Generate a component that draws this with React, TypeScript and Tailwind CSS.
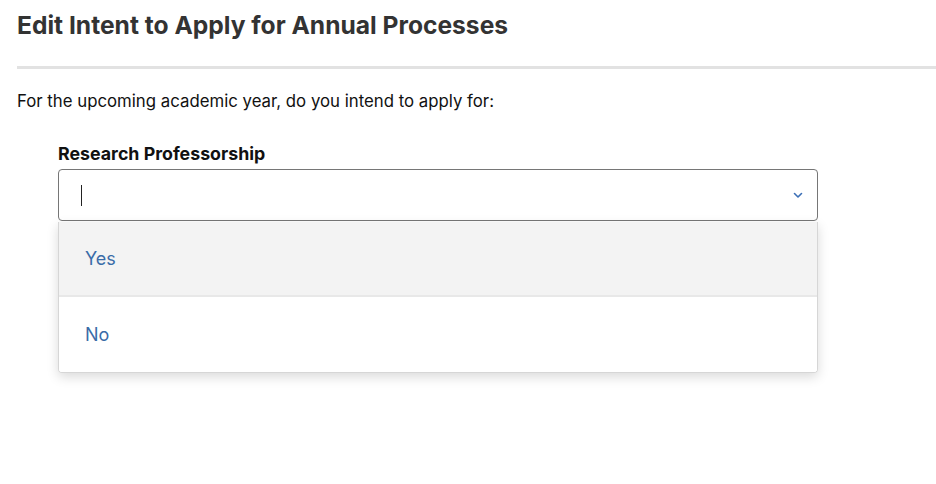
import React from "react";

const Chevron = () => (
  <svg width="10" height="7" viewBox="0 0 10 7" fill="none">
    <path d="M1.5 1.5L5 5L8.5 1.5" stroke="#3b6fb6" strokeWidth="1.6" strokeLinecap="round" strokeLinejoin="round" />
  </svg>
);

const App = () => {
  const options = ["Yes", "No"];

  return (
    <div className="h-[484px] w-[936px] bg-white font-['Inter',sans-serif] text-[#111]">
      <div className="pl-[17px] pt-[9px]">
        <h1 className="text-[24.6px] font-bold leading-[32px] text-[#333]">
          Edit Intent to Apply for Annual Processes
        </h1>
        <div className="mt-[25px] h-[3px] bg-[#e2e2e2]" />
        <p className="mt-[20px] text-[16.8px] leading-[24px]">
          For the upcoming academic year, do you intend to apply for:
        </p>

        <div className="mt-[28px] ml-[41px] w-[760px]">
          <label className="block text-[17.8px] font-bold leading-[25px]">Research Professorship</label>
          <div className="mt-[3px] flex h-[52px] items-center justify-between rounded-[4px] border border-[#767676] pl-[22px] pr-[14px]">
            <span className="h-[21px] w-px bg-[#222]" />
            <Chevron />
          </div>
          <div className="mt-px overflow-hidden rounded-b-[4px] border border-t-0 border-[#d6d6d6] shadow-[0_4px_12px_rgba(0,0,0,0.15)]">
            {options.map((o, i) => (
              <div
                key={o}
                className={`flex h-[75px] items-center px-[26px] text-[18px] text-[#3a6ca8] ${
                  i === 0 ? "border-b-2 border-[#e8e8e8] bg-[#f3f3f3]" : "bg-white"
                }`}
              >
                {o}
              </div>
            ))}
          </div>
        </div>
      </div>
    </div>
  );
};

export default App;
